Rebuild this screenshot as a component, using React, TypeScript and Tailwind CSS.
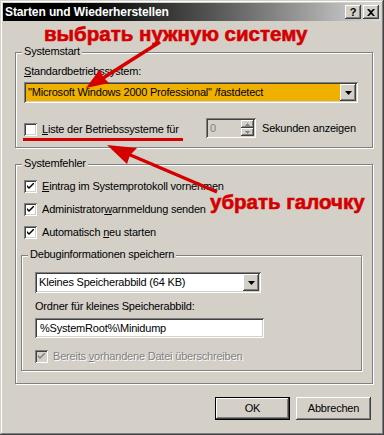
import React from "react";

const raised =
  "bg-[#d4d0c8] shadow-[inset_-1px_-1px_0_#404040,inset_1px_1px_0_#ffffff,inset_-2px_-2px_0_#808080,inset_2px_2px_0_#d4d0c8]";
const sunken =
  "shadow-[inset_1px_1px_0_#808080,inset_-1px_-1px_0_#ffffff,inset_2px_2px_0_#404040,inset_-2px_-2px_0_#d4d0c8]";
const etched = "border border-[#808080] shadow-[inset_1px_1px_0_#ffffff,1px_1px_0_#ffffff]";

// small arrow glyph for combobox / spinner buttons
const DownTri = ({ w = 7, color = "#000" }: { w?: number; color?: string }) => (
  <svg width={w} height={Math.ceil(w / 2)} viewBox={`0 0 ${w} ${Math.ceil(w / 2)}`}>
    <polygon points={`0,0 ${w},0 ${w / 2},${Math.ceil(w / 2)}`} fill={color} />
  </svg>
);

const Check = ({ color = "#000" }: { color?: string }) => (
  <svg width="7" height="7" viewBox="0 0 7 7" className="block">
    <path d="M0 2 L0 4 L2 6 L7 1 L7 -1 L2 4 Z" fill={color} />
  </svg>
);

const CheckBox = ({ checked, disabled }: { checked?: boolean; disabled?: boolean }) => (
  <div
    className={`w-[13px] h-[13px] shrink-0 flex items-center justify-center ${sunken} ${
      disabled ? "bg-[#d4d0c8]" : "bg-white"
    }`}
  >
    {checked && <Check color={disabled ? "#808080" : "#000"} />}
  </div>
);

const Group = ({
  title,
  className,
  children,
}: {
  title: string;
  className: string;
  children: React.ReactNode;
}) => (
  <div className={`relative ${etched} ${className}`}>
    <span className="absolute -top-[8px] left-[6px] px-[2px] bg-[#d4d0c8] leading-[13px]">{title}</span>
    {children}
  </div>
);

const U = ({ children }: { children: React.ReactNode }) => <span className="underline underline-offset-[1px]">{children}</span>;

const Combo = ({ text, width, selected }: { text: string; width: string; selected?: boolean }) => (
  <div className={`${width} h-[21px] bg-white p-[2px] flex ${sunken}`}>
    <div className={`flex-1 flex items-center pl-[2px] ${selected ? "bg-[#f0b000] text-black" : ""}`}>{text}</div>
    <div className={`w-[16px] h-[17px] flex items-center justify-center ${raised}`}>
      <DownTri />
    </div>
  </div>
);

const Button = ({ label, def }: { label: string; def?: boolean }) => (
  <div className={`w-[75px] h-[23px] ${def ? "border border-black" : ""}`}>
    <div className={`w-full h-full flex items-center justify-center ${raised}`}>{label}</div>
  </div>
);

export default function App() {
  return (
    <div
      className="relative w-[384px] h-[435px] bg-[#d4d0c8] p-[3px] text-[11px] leading-[13px] tracking-[-0.2px] text-black font-['Liberation_Sans',Arial,sans-serif] shadow-[inset_-1px_-1px_0_#404040,inset_1px_1px_0_#d4d0c8,inset_-2px_-2px_0_#808080,inset_2px_2px_0_#ffffff]"
    >
      {/* title bar */}
      <div className="h-[18px] flex items-center justify-between bg-gradient-to-r from-black from-10% to-[#dcdcdc] pl-[2px] pr-[2px]">
        <span className="text-white font-bold text-[12px] tracking-[-0.1px]">Starten und Wiederherstellen</span>
        <div className="flex gap-[2px]">
          <div className={`w-[16px] h-[14px] flex items-center justify-center font-bold text-[11px] ${raised}`}>?</div>
          <div className={`w-[16px] h-[14px] flex items-center justify-center ${raised}`}>
            <svg width="8" height="7" viewBox="0 0 8 7">
              <path d="M0 0 L2 0 L4 2 L6 0 L8 0 L5 3.5 L8 7 L6 7 L4 5 L2 7 L0 7 L3 3.5 Z" fill="#000" />
            </svg>
          </div>
        </div>
      </div>

      <div className="pl-[12px] flex flex-col">
        <Group title="Systemstart" className="mt-[31px] w-[358px] h-[96px] pl-[8px] pt-[12px]">
          <div>
            <U>S</U>tandardbetriebssystem:
          </div>
          <div className="mt-[4px]">
            <Combo text={'"Microsoft Windows 2000 Professional" /fastdetect'} width="w-[334px]" selected />
          </div>
          <div className="mt-[15px] h-[20px] flex items-center">
            <div className="w-[182px] flex items-center gap-[5px] pt-[2px]">
              <CheckBox />
              <span>
                <U>L</U>iste der Betriebssysteme für
              </span>
            </div>
            <div className={`w-[50px] h-[20px] bg-[#d4d0c8] p-[2px] flex ${sunken}`}>
              <div className="flex-1 pl-[2px] text-[#808080] flex items-center">0</div>
              <div className="flex flex-col">
                <div className={`w-[13px] h-[8px] flex items-center justify-center ${raised}`}>
                  <div className="rotate-180 flex">
                    <DownTri w={5} color="#808080" />
                  </div>
                </div>
                <div className={`w-[13px] h-[8px] flex items-center justify-center ${raised}`}>
                  <DownTri w={5} color="#808080" />
                </div>
              </div>
            </div>
            <span className="ml-[6px]">Sekunden anzeigen</span>
          </div>
        </Group>

        <Group title="Systemfehler" className="mt-[16px] w-[358px] h-[220px] pl-[5px] pt-[15px]">
          <div className="pl-[3px] flex flex-col gap-[10px]">
            <div className="flex items-center gap-[5px]">
              <CheckBox checked />
              <span>
                <U>E</U>intrag im Systemprotokoll vornehmen
              </span>
            </div>
            <div className="flex items-center gap-[5px]">
              <CheckBox checked />
              <span>
                Administrator<U>w</U>arnmeldung senden
              </span>
            </div>
            <div className="flex items-center gap-[5px]">
              <CheckBox checked />
              <span>
                Automatisch <U>n</U>eu starten
              </span>
            </div>
          </div>

          <Group title="Debuginformationen speichern" className="mt-[16px] w-[341px] h-[116px] pl-[13px] pt-[16px]">
            <Combo text="Kleines Speicherabbild (64 KB)" width="w-[226px]" />
            <div className="mt-[7px]">Ordner für kleines Speicherabbild:</div>
            <div className={`mt-[5px] w-[229px] h-[20px] bg-white flex items-center pl-[5px] ${sunken}`}>
              %SystemRoot%\Minidump
            </div>
            <div className="mt-[12px] flex items-center gap-[5px]">
              <CheckBox checked disabled />
              <span className="text-[#808080] [text-shadow:1px_1px_0_#ffffff]">
                Bereits <U>v</U>orhandene Datei überschreiben
              </span>
            </div>
          </Group>
        </Group>

        <div className="mt-[13px] w-[358px] pr-[2px] flex justify-end gap-[6px]">
          <Button label="OK" def />
          <Button label="Abbrechen" />
        </div>
      </div>

      {/* red annotations drawn over the dialog */}
      <span className="absolute left-[44px] top-[23px] text-[20.5px] leading-[22px] font-bold tracking-normal text-[#d40000] [-webkit-text-stroke:0.6px_#d40000]">
        выбрать нужную систему
      </span>
      <span className="absolute left-[210px] top-[191px] text-[20.5px] leading-[22px] font-bold tracking-normal text-[#d40000] [-webkit-text-stroke:0.6px_#d40000]">
        убрать галочку
      </span>
      <svg className="absolute left-0 top-0 pointer-events-none" width="384" height="435" viewBox="0 0 384 435">
        <rect x="23" y="138" width="160" height="3" fill="#d40000" />
        <line x1="160" y1="42" x2="100" y2="80" stroke="#d40000" strokeWidth="3.5" />
        <polygon points="86,88 109,83 103,77 100,69" fill="#d40000" />
        <line x1="217" y1="192" x2="128" y2="154" stroke="#d40000" strokeWidth="3.5" />
        <polygon points="107,145 137,148 130,155 127,164" fill="#d40000" />
      </svg>
    </div>
  );
}
